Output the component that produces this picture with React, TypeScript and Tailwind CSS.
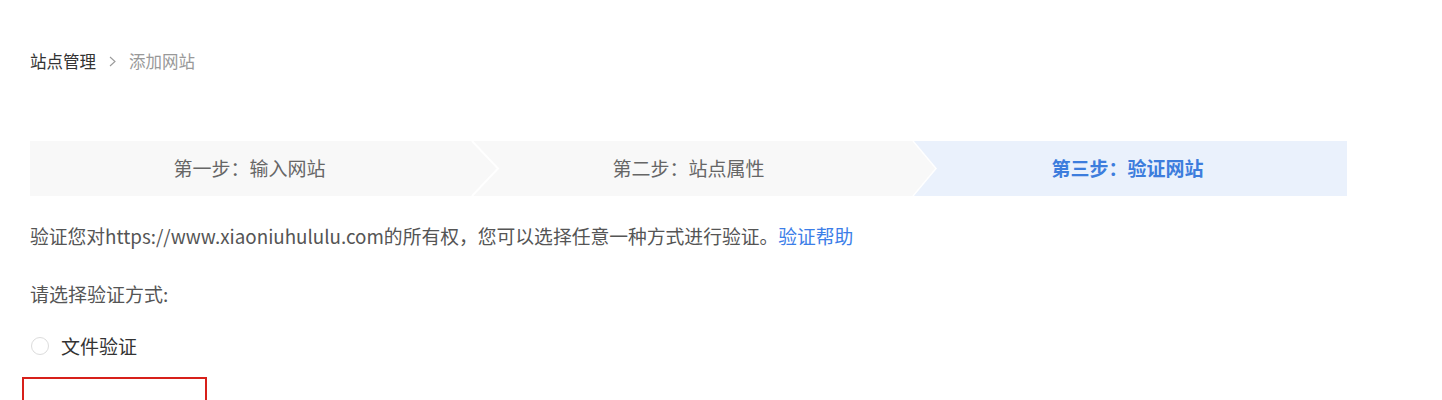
import React from 'react';

const cjk = "font-['Noto_Sans_CJK_SC',sans-serif]";

export default function App() {
  const steps = [
    { label: '第一步：输入网站', active: false },
    { label: '第二步：站点属性', active: false },
    { label: '第三步：验证网站', active: true },
  ];

  return (
    <main className={`bg-white min-h-screen ${cjk}`}>
      <div className="pl-[30px] pr-[95px]">
        {/* 面包屑 */}
        <div className="pt-[48px] h-[141px] flex items-start text-[16.5px] leading-[26px]">
          <span className="text-[#333]">站点管理</span>
          <svg className="mx-[13px] mt-[8px] w-[7px] h-[11px]" viewBox="0 0 7 11">
            <polyline points="1,1 6,5.5 1,10" fill="none" stroke="#9a9a9a" strokeWidth="1.1" />
          </svg>
          <span className="text-[#999]">添加网站</span>
        </div>

        {/* 步骤条 */}
        <div className="flex h-[55px]">
          {steps.map((s, i) => (
            <div
              key={i}
              className={`relative flex-1 flex items-center justify-center text-[19px] ${
                s.active ? 'bg-[#eaf1fc] text-[#3d7ddd] font-bold' : 'bg-[#f8f8f8] text-[#666]'
              }`}
            >
              {i === 1 && (
                <svg className="absolute left-0 top-0 h-[55px] w-[32px]" viewBox="0 0 32 55">
                  <polyline points="3,0 29,27.5 3,55" fill="none" stroke="#ffffff" strokeWidth="2" />
                </svg>
              )}
              {i === 2 && (
                <svg className="absolute left-0 top-0 h-[55px] w-[32px]" viewBox="0 0 32 55">
                  <polygon points="0,0 5,0 28,27.5 5,55 0,55" fill="#f8f8f8" />
                  <polyline points="5,0 28,27.5 5,55" fill="none" stroke="#ffffff" strokeWidth="1.5" />
                </svg>
              )}
              <span className="relative">{s.label}</span>
            </div>
          ))}
        </div>

        {/* 说明 */}
        <p className="mt-[26px] text-[18.8px] leading-[27px] text-[#555]">
          验证您对https://www.xiaoniuhululu.com的所有权，您可以选择任意一种方式进行验证。
          <a className="text-[#3c7ee8]">验证帮助</a>
        </p>

        <p className="mt-[31px] text-[19px] leading-[27px] text-[#555]">请选择验证方式:</p>

        <label className="mt-[26px] flex items-center gap-[12px] h-[26px]">
          <span className="ml-[1px] w-[18px] h-[18px] rounded-full border border-[#dcdcdc] bg-white"></span>
          <span className="text-[19px] text-[#333]">文件验证</span>
        </label>

        <div className="mt-[18px] -ml-[8px] w-[185px] h-[60px] border-2 border-[#d7201a]"></div>
      </div>
    </main>
  );
}
